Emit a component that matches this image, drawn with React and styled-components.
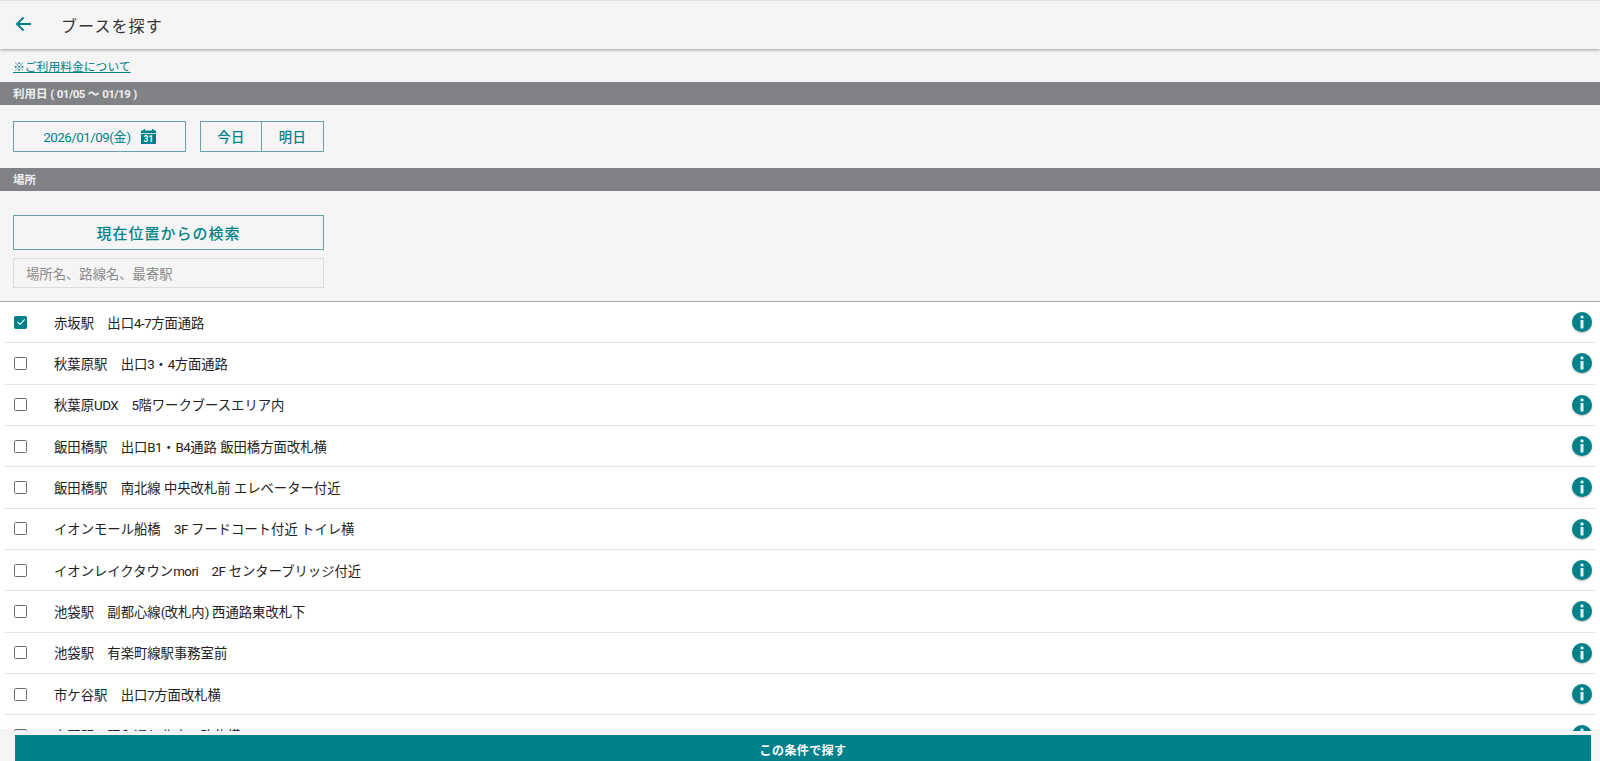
import React from 'react';
import styled, { createGlobalStyle } from 'styled-components';

const teal = '#00818a';

const GlobalStyle = createGlobalStyle`
  html, body {
    margin: 0;
    height: 100%;
    overflow: hidden;
    background: #fff;
    font-family: Roboto, "Noto Sans CJK JP", sans-serif;
    color: #333;
  }
  * { box-sizing: border-box; }
`;

const Page = styled.div`
  height: 761px;
  overflow: hidden;
`;
const Header = styled.header`
  height: 49px;
  display: flex;
  align-items: center;
  background: #f5f5f5;
  border-top: 1px solid #e4e4e4;
  box-shadow: 0 1px 3px rgba(0, 0, 0, 0.35);
  position: relative;
`;
const BackButton = styled.button`
  width: 61px;
  height: 100%;
  padding: 0 0 3px 15px;
  display: flex;
  align-items: center;
  border: 0;
  background: none;
  color: ${teal};
`;
const Title = styled.h1`
  margin: 0 0 1px;
  font-size: 16px;
  font-weight: 400;
  letter-spacing: 1.1px;
  color: #333;
`;
const Panel = styled.div`
  background: #f5f5f5;
`;
const FeeLink = styled.a`
  display: block;
  height: 33px;
  padding: 10px 13px 0;
  font-size: 11.8px;
  line-height: 16px;
  color: ${teal};
  text-decoration: underline;
`;
const SectionBar = styled.div`
  height: 23px;
  padding: 1px 13px 0;
  background: #818285;
  color: #f0f0f0;
  font-size: 11.5px;
  font-weight: 700;
  line-height: 23px;
`;
const DateRow = styled.div`
  display: flex;
  height: 63px;
  padding: 16px 13px 0;
`;
const DateField = styled.div`
  width: 173px;
  height: 31px;
  margin-right: 14px;
  display: flex;
  align-items: center;
  justify-content: center;
  gap: 10px;
  border: 1px solid #6f9fa5;
  color: ${teal};
  font-size: 13.33px;
`;
const DayButton = styled.div`
  width: ${({ $joined }) => ($joined ? 63 : 62)}px;
  height: 31px;
  display: flex;
  align-items: center;
  justify-content: center;
  border: 1px solid #6f9fa5;
  margin-left: ${({ $joined }) => ($joined ? '-1px' : 0)};
  color: ${teal};
  font-size: 13.33px;
  font-weight: 500;
  letter-spacing: 0.5px;
`;
const SearchBlock = styled.div`
  height: 111px;
  padding: 24px 13px 0;
  border-bottom: 1px solid #a5a5a5;
`;
const LocateButton = styled.div`
  width: 311px;
  height: 35px;
  display: flex;
  align-items: center;
  justify-content: center;
  border: 1px solid #6f9fa5;
  color: ${teal};
  font-size: 15px;
  font-weight: 500;
  letter-spacing: 1px;
`;
const SearchInput = styled.div`
  width: 311px;
  height: 30px;
  margin-top: 8px;
  padding-left: 12px;
  display: flex;
  align-items: center;
  border: 1px solid #dcdcdc;
  color: #8a8a8a;
  font-size: 13.33px;
`;
const List = styled.ul`
  margin: 0;
  padding: 0 5px;
  list-style: none;
  background: #fff;
`;
const Row = styled.li`
  height: 41.33px;
  padding: 0 3px 0 9px;
  display: flex;
  align-items: center;
  border-bottom: 1px solid #e2e2e2;
`;
const Box = styled.span`
  flex: none;
  width: 13px;
  height: 13px;
  margin-right: 27px;
  display: flex;
  align-items: center;
  justify-content: center;
  border: 1.5px solid ${({ $on }) => ($on ? teal : '#6b6b6b')};
  border-radius: 1.5px;
  background: ${({ $on }) => ($on ? teal : '#fff')};
`;
const RowText = styled.span`
  flex: 1;
  font-size: 13.33px;
  color: #222;
  white-space: pre;
`;
const Latin = styled.span`
  letter-spacing: -0.5px;
`;
const InfoBadge = styled.span`
  width: 20px;
  height: 20px;
  display: flex;
  align-items: center;
  justify-content: center;
  border-radius: 50%;
  background: ${teal};
  box-shadow: 0 1px 2px rgba(0, 0, 0, 0.3);
`;
const Footer = styled.footer`
  position: fixed;
  left: 0;
  right: 0;
  bottom: 0;
  height: 30px;
  padding: 4px 9px 0 15px;
  background: #f5f5f5;
  box-shadow: 0 -1px 3px rgba(0, 0, 0, 0.1);
  overflow: hidden;
`;
const SubmitButton = styled.button`
  width: 100%;
  height: 29px;
  padding: 0;
  border: 0;
  background: ${teal};
  color: #fff;
  font-family: inherit;
  font-size: 12px;
  font-weight: 700;
  letter-spacing: 0.4px;
`;

const places = [
  '赤坂駅　出口4-7方面通路',
  '秋葉原駅　出口3・4方面通路',
  '秋葉原UDX　5階ワークブースエリア内',
  '飯田橋駅　出口B1・B4通路 飯田橋方面改札横',
  '飯田橋駅　南北線 中央改札前 エレベーター付近',
  'イオンモール船橋　3F フードコート付近 トイレ横',
  'イオンレイクタウンmori　2F センターブリッジ付近',
  '池袋駅　副都心線(改札内) 西通路東改札下',
  '池袋駅　有楽町線駅事務室前',
  '市ケ谷駅　出口7方面改札横',
  '上野駅　昭和通り北広口改札横',
];

// the digits and latin letters sit tighter than the kana around them
const Mixed = ({ text }) =>
  text.split(/([A-Za-z0-9/()-]+)/).map((part, i) =>
    i % 2 ? <Latin key={i}>{part}</Latin> : part
  );

const ArrowIcon = () => (
  <svg width="18" height="18" viewBox="0 0 18 18" fill="none" stroke="currentColor" strokeWidth="2">
    <path d="M16 9H2.500M8.500 2.500 2 9l6.500 6.500" />
  </svg>
);

const CalendarIcon = () => (
  <svg width="15" height="15" viewBox="0 0 15 15">
    <path fill={teal} d="M0 1.500h2.500V0H4v1.500h7V0h1.500v1.500H15v2.500H0z" />
    <rect x="0" y="4.800" width="15" height="10.200" fill={teal} />
    <text x="7.500" y="13.200" textAnchor="middle" fontSize="8.500" fontWeight="700" fill="#fff" fontFamily="Roboto, sans-serif">31</text>
  </svg>
);

const CheckIcon = () => (
  <svg width="10" height="10" viewBox="0 0 10 10" fill="none" stroke="#fff" strokeWidth="1.100">
    <path d="M1.500 5.200 4 7.500 8.700 2.300" />
  </svg>
);

const InfoIcon = () => (
  <svg width="6" height="14" viewBox="0 0 6 14" fill="#e6f3f4">
    <rect x="1.500" y="0.500" width="3" height="3" rx="1" />
    <rect x="1.500" y="5" width="3" height="8.500" rx="0.600" />
  </svg>
);

const App = () => (
  <Page>
    <GlobalStyle />
    <Header>
      <BackButton><ArrowIcon /></BackButton>
      <Title>ブースを探す</Title>
    </Header>
    <Panel>
      <FeeLink>※ご利用料金について</FeeLink>
      <SectionBar><Mixed text="利用日 ( 01/05 〜 01/19 )" /></SectionBar>
      <DateRow>
        <DateField><span><Mixed text="2026/01/09(金)" /></span><CalendarIcon /></DateField>
        <DayButton>今日</DayButton>
        <DayButton $joined>明日</DayButton>
      </DateRow>
      <SectionBar>場所</SectionBar>
      <SearchBlock>
        <LocateButton>現在位置からの検索</LocateButton>
        <SearchInput>場所名、路線名、最寄駅</SearchInput>
      </SearchBlock>
    </Panel>
    <List>
      {places.map((place, i) => (
        <Row key={place}>
          <Box $on={i === 0}>{i === 0 && <CheckIcon />}</Box>
          <RowText><Mixed text={place} /></RowText>
          <InfoBadge><InfoIcon /></InfoBadge>
        </Row>
      ))}
    </List>
    <Footer>
      <SubmitButton>この条件で探す</SubmitButton>
    </Footer>
  </Page>
);

export default App;
